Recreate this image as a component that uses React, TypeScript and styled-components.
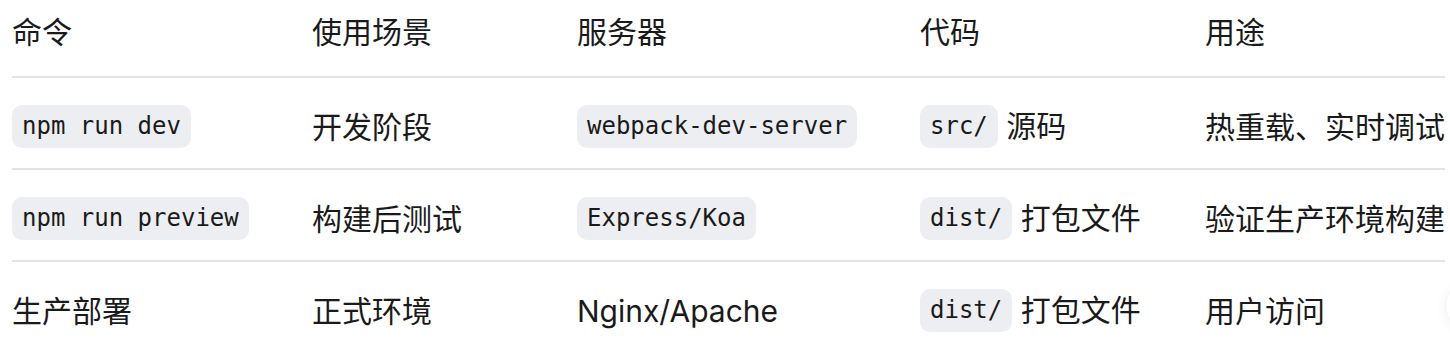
import styled, { createGlobalStyle } from "styled-components";

const GlobalStyle = createGlobalStyle`
  html, body {
    margin: 0;
    padding: 0;
    background: #ffffff;
  }
  body {
    font-family: Inter, "Noto Sans CJK SC", sans-serif;
    color: #1a1a1a;
    overflow: hidden;
  }
`;

const Wrap = styled.div`
  padding: 0 5px 0 12px;
`;

const Table = styled.table`
  width: 1433px;
  table-layout: fixed;
  border-collapse: collapse;
  font-size: 30px;
  line-height: 1.4;
`;

const HeadCell = styled.th`
  text-align: left;
  font-weight: 400;
  padding: 11px 0 23px;
  border-bottom: 2px solid #e3e3e3;
  vertical-align: middle;
`;

const Row = styled.tr<{ $last?: boolean }>`
  border-bottom: ${(p) => (p.$last ? "none" : "2px solid #e3e3e3")};
`;

const Cell = styled.td`
  height: 86px;
  padding: 4px 0 0;
  vertical-align: middle;
  white-space: nowrap;
`;

const Code = styled.code`
  display: inline-block;
  font-family: "DejaVu Sans Mono", monospace;
  font-size: 24px;
  line-height: 33px;
  padding: 5px 10px;
  border-radius: 10px;
  background: #edeef1;
  color: #1a1a1a;
  vertical-align: middle;
`;

const Text = styled.span`
  vertical-align: middle;
`;

const Floating = styled.div`
  position: fixed;
  left: 1446px;
  top: 282px;
  width: 48px;
  height: 48px;
  border-radius: 50%;
  background: #ffffff;
  box-shadow: 0 2px 14px rgba(0, 0, 0, 0.06), 0 0 2px rgba(0, 0, 0, 0.08);
`;

const widths = [300, 265, 343, 285, 240];
const headers = ["命令", "使用场景", "服务器", "代码", "用途"];

type Part = { code?: string; text?: string };

const rows: Part[][] = [
  [
    { code: "npm run dev" },
    { text: "开发阶段" },
    { code: "webpack-dev-server" },
    { code: "src/", text: "源码" },
    { text: "热重载、实时调试" },
  ],
  [
    { code: "npm run preview" },
    { text: "构建后测试" },
    { code: "Express/Koa" },
    { code: "dist/", text: "打包文件" },
    { text: "验证生产环境构建" },
  ],
  [
    { text: "生产部署" },
    { text: "正式环境" },
    { text: "Nginx/Apache" },
    { code: "dist/", text: "打包文件" },
    { text: "用户访问" },
  ],
];

export default function App() {
  return (
    <>
      <GlobalStyle />
      <Wrap>
        <Table>
          <colgroup>
            {widths.map((w, i) => (
              <col key={i} style={{ width: w }} />
            ))}
          </colgroup>
          <thead>
            <tr>
              {headers.map((h) => (
                <HeadCell key={h}>{h}</HeadCell>
              ))}
            </tr>
          </thead>
          <tbody>
            {rows.map((row, r) => (
              <Row key={r} $last={r === rows.length - 1}>
                {row.map((cell, c) => (
                  <Cell key={c}>
                    {cell.code && <Code>{cell.code}</Code>}
                    {cell.code && cell.text && " "}
                    {cell.text && <Text>{cell.text}</Text>}
                  </Cell>
                ))}
              </Row>
            ))}
          </tbody>
        </Table>
      </Wrap>
      <Floating />
    </>
  );
}
